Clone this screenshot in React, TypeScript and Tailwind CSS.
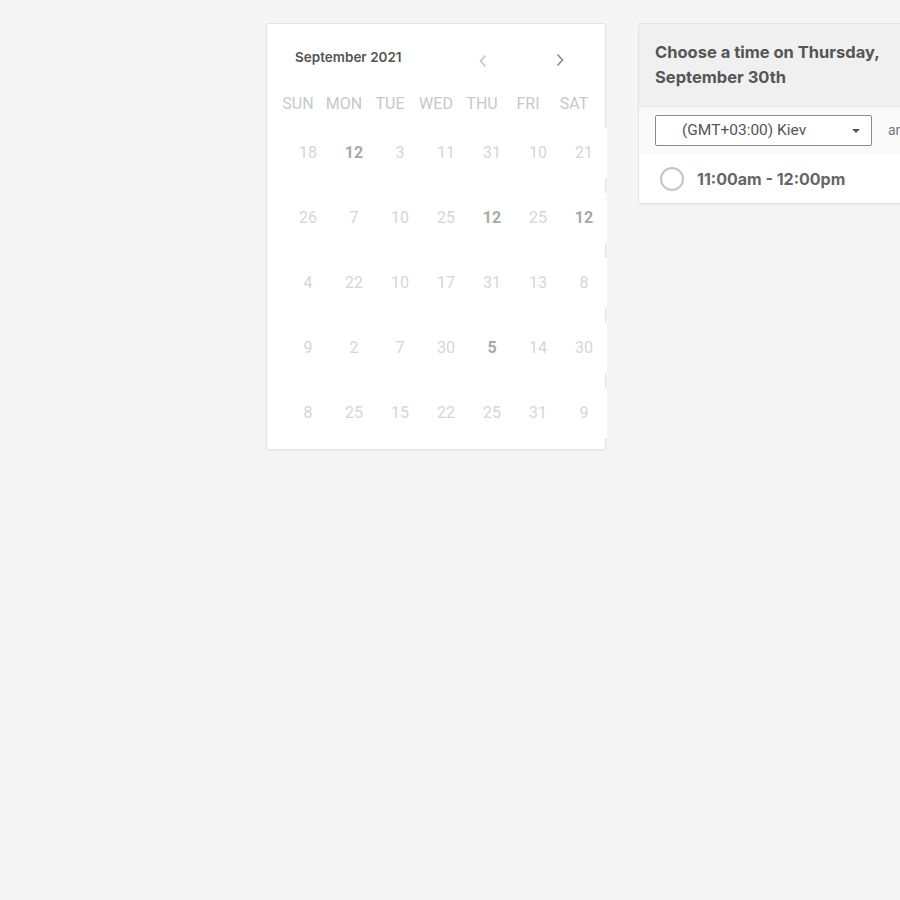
import React from "react";

const weekdays = ["SUN", "MON", "TUE", "WED", "THU", "FRI", "SAT"];
const rows: (string | [string, boolean])[][] = [
  ["18", ["12", true], "3", "11", "31", "10", "21"],
  ["26", "7", "10", "25", ["12", true], "25", ["12", true]],
  ["4", "22", "10", "17", "31", "13", "8"],
  ["9", "2", "7", "30", ["5", true], "14", "30"],
  ["8", "25", "15", "22", "25", "31", "9"],
];

export default function App() {
  return (
    <div className="min-h-screen w-full overflow-hidden bg-[#f5f5f5]">
      <div className="flex items-start gap-[32px] pl-[266px] pt-[23px]">
        {/* Calendar card */}
        <div className="w-[340px] shrink-0 rounded-[2px] border border-[#e4e4e4] bg-white pb-[11px] shadow-[0_1px_2px_rgba(0,0,0,0.05)]">
          <div className="flex h-[66px] items-center pl-[28px]">
            <span className="font-['Inter',sans-serif] text-[13.5px] font-semibold text-[#555]">
              September 2021
            </span>
            <svg className="ml-[76px] mt-[8px]" width="10" height="14" viewBox="0 0 10 14">
              <path d="M7.5 1.5 L2.5 7 L7.5 12.5" fill="none" stroke="#c4c4c4" strokeWidth="1.6" />
            </svg>
            <svg className="ml-[67px] mt-[6px]" width="10" height="14" viewBox="0 0 10 14">
              <path d="M2.5 1.5 L7.5 7 L2.5 12.5" fill="none" stroke="#8a8a8a" strokeWidth="1.6" />
            </svg>
          </div>
          <div className="ml-[8px] grid h-[28px] grid-cols-[repeat(7,46px)] items-center font-['Roboto',sans-serif] text-[16px] text-[#c8c8c8]">
            {weekdays.map((d) => (
              <div key={d} className="text-center">
                {d}
              </div>
            ))}
          </div>
          <div className="ml-[18px] mt-[10px] flex flex-col gap-[15px]">
            {rows.map((r, i) => (
              <div key={i} className="grid grid-cols-[repeat(7,46px)]">
                {r.map((c, j) => {
                  const bold = Array.isArray(c);
                  const t = Array.isArray(c) ? c[0] : c;
                  return (
                    <div
                      key={j}
                      className={
                        "flex h-[50px] items-center justify-center bg-white font-['Roboto',sans-serif] text-[16px] " +
                        (bold ? "font-bold text-[#a9a9a9]" : "text-[#d6d6d6]")
                      }
                    >
                      {t}
                    </div>
                  );
                })}
              </div>
            ))}
          </div>
        </div>

        {/* Time panel */}
        <div className="w-[340px] shrink-0 rounded-[2px] border border-[#e4e4e4] bg-white shadow-[0_1px_2px_rgba(0,0,0,0.05)]">
          <div className="bg-[#f0f0f0] px-[16px] py-[16px] font-['Inter',sans-serif] text-[16.5px] font-bold leading-[25px] text-[#555]">
            Choose a time on Thursday,
            <br />
            September 30th
          </div>
          <div className="flex h-[48px] items-center border-t border-[#e8e8e8] bg-[#fafafa] pl-[16px]">
            <div className="relative flex h-[31px] w-[217px] items-center rounded-[2px] border border-[#8a8a8a] bg-white pl-[26px] font-['Roboto',sans-serif] text-[15.5px] text-[#555]">
              <span>(GMT+03:00) Kiev</span>
              <svg className="absolute right-[11px] top-[13px]" width="8" height="4" viewBox="0 0 8 4">
                <path d="M0 0 L8 0 L4 4 Z" fill="#555" />
              </svg>
            </div>
            <span className="ml-[16px] font-['Roboto',sans-serif] text-[14px] text-[#777]">and</span>
          </div>
          <div className="flex h-[49px] items-center bg-white pl-[21px]">
            <div className="h-[24px] w-[24px] rounded-full border-2 border-[#c4c4c4]" />
            <span className="ml-[13px] font-['Inter',sans-serif] text-[16px] font-bold text-[#666]">
              11:00am - 12:00pm
            </span>
          </div>
        </div>
      </div>
    </div>
  );
}
